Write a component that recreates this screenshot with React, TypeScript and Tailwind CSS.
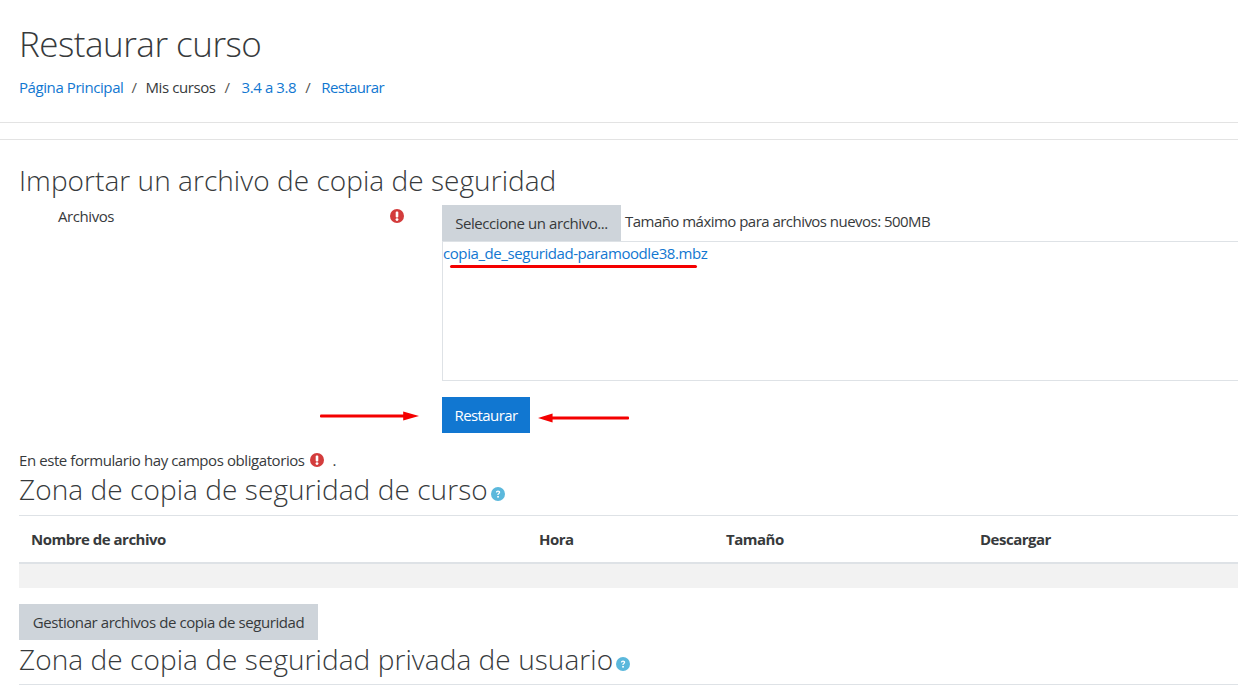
const font = { fontFamily: '"Open Sans", sans-serif' };

function Req({ className }: { className: string }) {
  return (
    <svg viewBox="0 0 14 14" className={className}>
      <circle cx="7" cy="7" r="7" fill="#d33c3c" />
      <rect x="5.7" y="2.6" width="2.6" height="5.8" rx="1" fill="#fff" />
      <circle cx="7" cy="10.6" r="1.45" fill="#fff" />
    </svg>
  );
}

function Help() {
  return (
    <svg viewBox="0 0 14 14" className="h-[14px] w-[14px] shrink-0 self-end">
      <circle cx="7" cy="7" r="7" fill="#5bb8dc" />
      <path d="M4.9 5.4c0-1.2 1-1.9 2.1-1.9 1.3 0 2.2.7 2.2 1.8 0 1.5-1.7 1.5-1.7 2.7H6.3c0-1.8 1.5-1.8 1.5-2.6 0-.4-.3-.7-.8-.7s-.8.3-.9.8z" fill="#fff" />
      <rect x="6.2" y="9" width="1.7" height="1.6" fill="#fff" />
    </svg>
  );
}

function Arrow({ className, flip }: { className: string; flip?: boolean }) {
  return (
    <svg viewBox="0 0 100 10" preserveAspectRatio="none" className={className}>
      <g transform={flip ? "translate(100 0) scale(-1 1)" : undefined}>
        <rect x="0" y="3.6" width="86" height="2.8" rx="1" fill="#f40000" />
        <polygon points="84,0.5 100,5 84,9.5" fill="#f40000" />
      </g>
    </svg>
  );
}

export default function App() {
  return (
    <div style={font} className="relative h-[687px] w-[1238px] overflow-hidden bg-white text-[15px] leading-[21px] tracking-[-0.42px] text-[#373a3c]">
      <header className="h-[123px] border-b border-[#e3e3e3] pl-[19px] pt-[20px]">
        <h1 className="text-[35px] font-light leading-[48px] tracking-[-0.5px] text-[#373a3c]">Restaurar curso</h1>
        <nav className="mt-[9px] flex text-[#1177d1]">
          <a>Página Principal</a>
          <span className="ml-[8px] text-[#555]">/</span>
          <span className="ml-[9px] text-[#373a3c]">Mis cursos</span>
          <span className="ml-[9px] text-[#555]">/</span>
          <a className="ml-[12px]">3.4 a 3.8</a>
          <span className="ml-[9px] text-[#555]">/</span>
          <a className="ml-[11px] tracking-[-0.6px]">Restaurar</a>
        </nav>
      </header>

      <main className="mt-[16px] border-t border-[#e3e3e3] pl-[19px]">
        <h2 className="mb-[5px] mt-[20px] text-[28px] font-light leading-[40px] tracking-[0.05px]">Importar un archivo de copia de seguridad</h2>

        <div className="flex h-[176px]">
          <div className="flex w-[423px] shrink-0 items-start justify-between pr-[38px] pt-[1px]">
            <span className="ml-[39px]">Archivos</span>
            <Req className="mt-[3px] h-[14px] w-[14px]" />
          </div>
          <div className="flex-1">
            <div className="flex h-[36px] items-start">
              <button className="h-[36px] w-[179px] bg-[#ced4da] text-center leading-[37px]">Seleccione un archivo...</button>
              <span className="ml-[4px] mt-[6px] tracking-[-0.53px]">Tamaño máximo para archivos nuevos: 500MB</span>
            </div>
            <div className="h-[140px] border border-r-0 border-[#dee2e6] pt-[1px] text-[#1177d1]">copia_de_seguridad-paramoodle38.mbz</div>
          </div>
        </div>

        <div className="mt-[16px] pl-[423px]">
          <button className="h-[36px] w-[88px] bg-[#1177d1] tracking-[-0.6px] text-white">Restaurar</button>
        </div>

        <p className="mt-[18px] flex h-[18px] items-center">
          En este formulario hay campos obligatorios
          <Req className="ml-[5px] h-[14px] w-[14px]" />
          <span className="ml-[9px]">.</span>
        </p>

        <h2 className="flex h-[40px] text-[28px] font-light leading-[40px] tracking-[0.07px]">
          Zona de copia de seguridad de curso
          <span className="ml-[3px] flex h-[32px]"><Help /></span>
        </h2>

        <div className="mt-[6px] grid h-[49px] grid-cols-[508px_187px_254px_1fr] items-center border-t border-b-2 border-[#dee2e6] pl-[12px] font-bold tracking-[-0.5px]">
          <span>Nombre de archivo</span>
          <span>Hora</span>
          <span>Tamaño</span>
          <span>Descargar</span>
        </div>
        <div className="h-[24px] bg-[#f2f2f2]" />

        <button className="mt-[16px] block h-[36px] w-[299px] bg-[#ced4da]">Gestionar archivos de copia de seguridad</button>

        <h2 className="-mt-[1px] flex h-[40px] text-[28px] font-light leading-[40px] tracking-[0.07px]">
          Zona de copia de seguridad privada de usuario
          <span className="ml-[3px] flex h-[32px]"><Help /></span>
        </h2>
        <div className="mt-[5px] border-t border-[#dee2e6]" />
      </main>

      <div className="absolute left-[450px] top-[265px] h-[3px] w-[247px] rounded-full bg-[#f40000]" />
      <Arrow className="absolute left-[320px] top-[411px] h-[10px] w-[99px]" />
      <Arrow flip className="absolute left-[538px] top-[413px] h-[10px] w-[91px]" />
    </div>
  );
}
